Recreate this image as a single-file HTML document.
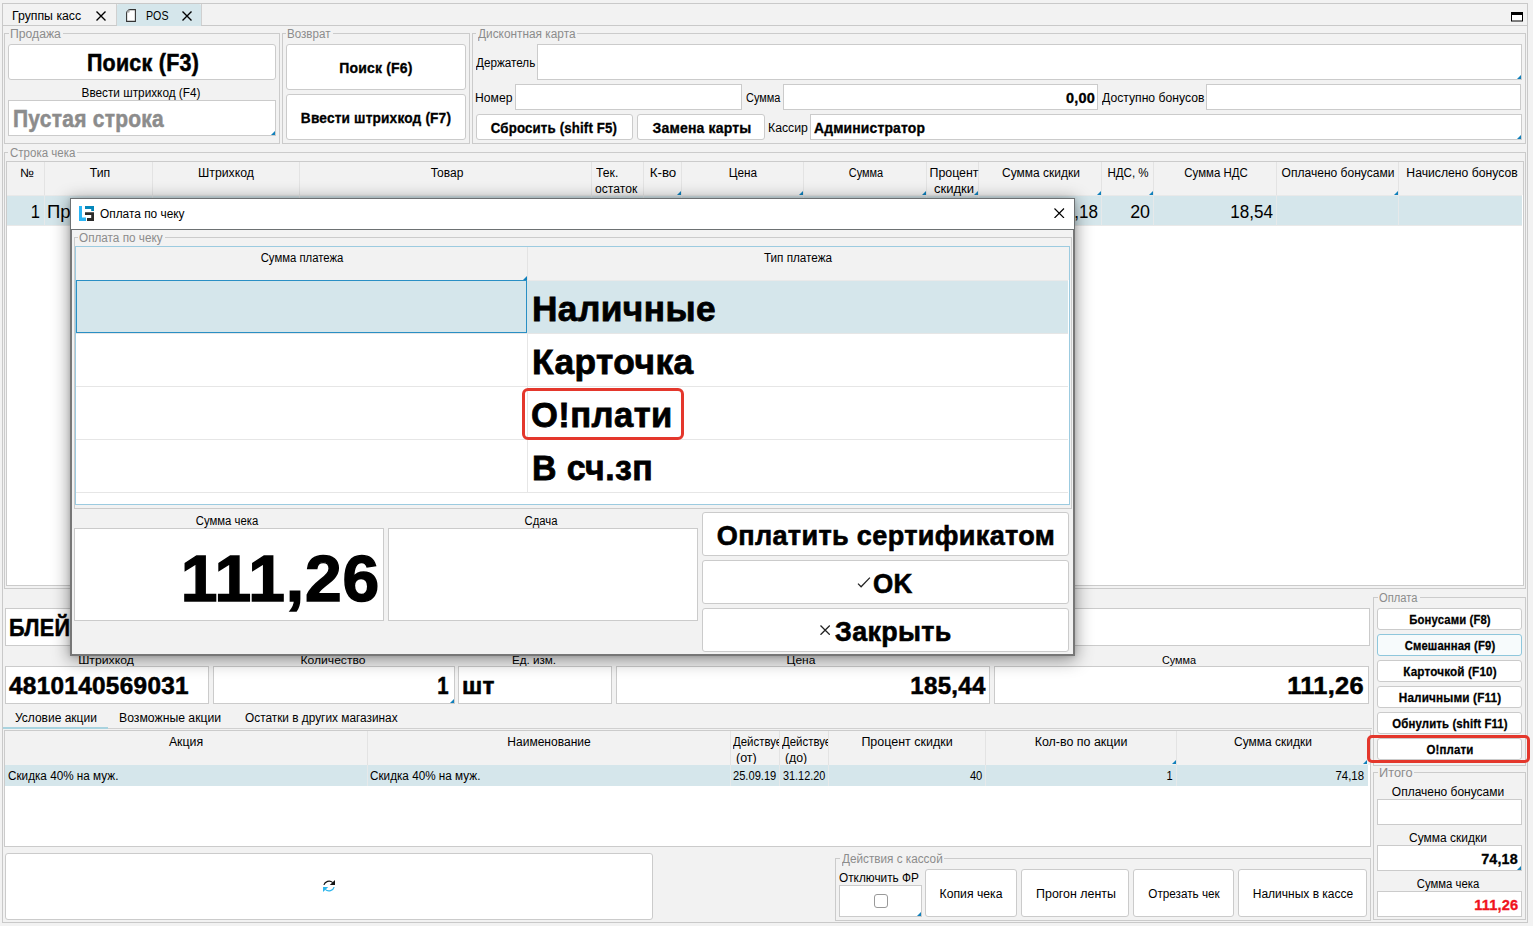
<!DOCTYPE html>
<html lang="ru"><head><meta charset="utf-8"><title>POS</title>
<style>
*{box-sizing:content-box;margin:0;padding:0}
html,body{width:1533px;height:926px;overflow:hidden;background:#f2f2f2}
body{position:relative;font-family:"Liberation Sans",sans-serif;color:#000}
.b{position:absolute;display:block}
.t{position:absolute;display:inline-block;white-space:nowrap}
</style></head>
<body>
<div class="b" style="left:2px;top:3px;width:1524px;height:918px;border:1px solid #c9c9c9;"></div>
<div class="b" style="left:3px;top:25px;width:1524px;height:1px;background:#c9c9c9"></div>
<div class="b" style="left:117px;top:4px;width:84px;height:22px;background:#d5e6eb;border-radius:2px 2px 0 0;"></div>
<div class="b" style="left:116px;top:4px;width:1px;height:21px;background:#d0d0d0"></div>
<div class="b" style="left:201px;top:4px;width:1px;height:21px;background:#d0d0d0"></div>
<span class="t" id="t1" style="top:7.84px;font-size:12px;line-height:16px;left:12.34px;transform-origin:0 50%;transform:scaleX(1.0244);">Группы касс</span>
<span class="t" id="t2" style="top:7.84px;font-size:12px;line-height:16px;left:145.97px;transform-origin:0 50%;transform:scaleX(0.8870);">POS</span>
<svg class="b" style="left:96px;top:10.5px" width="10" height="10" viewBox="0 0 10 10"><path d="M0.5 0.5 L9.5 9.5 M9.5 0.5 L0.5 9.5" stroke="#000" stroke-width="1.4" fill="none"/></svg>
<svg class="b" style="left:182px;top:10.5px" width="10" height="10" viewBox="0 0 10 10"><path d="M0.5 0.5 L9.5 9.5 M9.5 0.5 L0.5 9.5" stroke="#000" stroke-width="1.4" fill="none"/></svg>
<svg class="b" style="left:126px;top:9px" width="10" height="13" viewBox="0 0 10 13"><path d="M3.2 0.6 H9.4 V12.4 H0.6 V3.2 Z" fill="#fff" stroke="#333" stroke-width="1.1"/><path d="M0.6 3.2 H3.2 V0.6 Z" fill="#bbb" stroke="#888" stroke-width="0.5"/></svg>
<svg class="b" style="left:1511px;top:11.5px" width="12" height="10" viewBox="0 0 12 10"><rect x="0.5" y="0.5" width="11" height="8.5" fill="#fff" stroke="#000" stroke-width="1"/><rect x="0" y="0" width="12" height="3" fill="#000"/></svg>
<div class="b" style="left:4px;top:33px;width:274px;height:109px;border:1px solid #cbcbcb;"></div>
<div class="b" style="left:8.8px;top:33px;width:54px;height:1px;background:#f2f2f2"></div>
<span class="t" id="t3" style="top:25.57px;font-size:12.5px;line-height:16px;color:#8c8c8c;left:9.85px;transform-origin:0 50%;transform:scaleX(0.9751);">Продажа</span>
<div class="b" style="left:8px;top:44px;width:266px;height:34px;background:#fff;border:1px solid #cbcbcb;border-radius:3px;"></div>
<span class="t" id="t4" style="top:48.03px;font-size:23px;line-height:30px;font-weight:700;-webkit-text-stroke:0.51px;letter-spacing:0.28px;left:142.65px;transform-origin:50% 50%;transform:translateX(-50%) scaleX(0.9316);">Поиск (F3)</span>
<span class="t" id="t5" style="top:84.84px;font-size:12px;line-height:16px;left:140.84px;transform-origin:50% 50%;transform:translateX(-50%) scaleX(0.9823);">Ввести штрихкод (F4)</span>
<div class="b" style="left:8px;top:100px;width:266px;height:34px;background:#fff;border:1px solid #cbcbcb;"></div>
<span class="t" id="t6" style="top:104.03px;font-size:23px;line-height:30px;font-weight:700;-webkit-text-stroke:0.51px;letter-spacing:0.28px;color:#8c8c8c;left:12.52px;transform-origin:0 50%;transform:scaleX(0.9125);">Пустая строка</span>
<div class="b" style="left:271px;top:131px;width:0;height:0;border-left:4px solid transparent;border-bottom:4px solid #1080bb"></div>
<div class="b" style="left:282px;top:33px;width:186px;height:109px;border:1px solid #cbcbcb;"></div>
<div class="b" style="left:286.2px;top:33px;width:46.5px;height:1px;background:#f2f2f2"></div>
<span class="t" id="t7" style="top:25.57px;font-size:12.5px;line-height:16px;color:#8c8c8c;left:287.29px;transform-origin:0 50%;transform:scaleX(0.9272);">Возврат</span>
<div class="b" style="left:286px;top:44px;width:178px;height:44px;background:#fff;border:1px solid #cbcbcb;border-radius:3px;"></div>
<span class="t" id="t8" style="top:59.15px;font-size:14px;line-height:18px;font-weight:700;-webkit-text-stroke:0.31px;letter-spacing:0.17px;left:376.40px;transform-origin:50% 50%;transform:translateX(-50%) scaleX(0.9999);">Поиск (F6)</span>
<div class="b" style="left:286px;top:94px;width:178px;height:44px;background:#fff;border:1px solid #cbcbcb;border-radius:3px;"></div>
<span class="t" id="t9" style="top:108.95px;font-size:14px;line-height:18px;font-weight:700;-webkit-text-stroke:0.31px;letter-spacing:0.17px;left:375.90px;transform-origin:50% 50%;transform:translateX(-50%) scaleX(0.9771);">Ввести штрихкод (F7)</span>
<div class="b" style="left:472px;top:33px;width:1052px;height:109px;border:1px solid #cbcbcb;"></div>
<div class="b" style="left:475.8px;top:33px;width:101.6px;height:1px;background:#f2f2f2"></div>
<span class="t" id="t10" style="top:25.57px;font-size:12.5px;line-height:16px;color:#8c8c8c;left:477.80px;transform-origin:0 50%;transform:scaleX(0.9478);">Дисконтная карта</span>
<span class="t" id="t11" style="top:54.84px;font-size:12px;line-height:16px;left:476.20px;transform-origin:0 50%;transform:scaleX(0.9741);">Держатель</span>
<div class="b" style="left:537px;top:44px;width:983px;height:34px;background:#fff;border:1px solid #cbcbcb;"></div>
<div class="b" style="left:1517px;top:75px;width:0;height:0;border-left:4px solid transparent;border-bottom:4px solid #1080bb"></div>
<span class="t" id="t12" style="top:89.84px;font-size:12px;line-height:16px;left:475.25px;transform-origin:0 50%;transform:scaleX(1.0137);">Номер</span>
<div class="b" style="left:515px;top:84px;width:225px;height:24px;background:#fff;border:1px solid #cbcbcb;"></div>
<span class="t" id="t13" style="top:89.84px;font-size:12px;line-height:16px;left:746.19px;transform-origin:0 50%;transform:scaleX(0.9135);">Сумма</span>
<div class="b" style="left:783px;top:84px;width:313px;height:24px;background:#fff;border:1px solid #cbcbcb;"></div>
<span class="t" id="t14" style="top:89.15px;font-size:14px;line-height:18px;font-weight:700;-webkit-text-stroke:0.31px;letter-spacing:0.17px;right:438.40px;transform-origin:100% 50%;transform:scaleX(1.0349);">0,00</span>
<span class="t" id="t15" style="top:89.84px;font-size:12px;line-height:16px;left:1102.00px;transform-origin:0 50%;transform:scaleX(1.0145);">Доступно бонусов</span>
<div class="b" style="left:1206px;top:84px;width:313px;height:24px;background:#fff;border:1px solid #cbcbcb;"></div>
<div class="b" style="left:476px;top:114px;width:155px;height:24px;background:#fff;border:1px solid #cbcbcb;border-radius:3px;"></div>
<span class="t" id="t16" style="top:118.95px;font-size:14px;line-height:18px;font-weight:700;-webkit-text-stroke:0.31px;letter-spacing:0.17px;left:554.41px;transform-origin:50% 50%;transform:translateX(-50%) scaleX(0.9463);">Сбросить (shift F5)</span>
<div class="b" style="left:637px;top:114px;width:126px;height:24px;background:#fff;border:1px solid #cbcbcb;border-radius:3px;"></div>
<span class="t" id="t17" style="top:118.95px;font-size:14px;line-height:18px;font-weight:700;-webkit-text-stroke:0.31px;letter-spacing:0.17px;left:701.67px;transform-origin:50% 50%;transform:translateX(-50%) scaleX(1.0006);">Замена карты</span>
<span class="t" id="t18" style="top:119.84px;font-size:12px;line-height:16px;left:768.44px;transform-origin:0 50%;transform:scaleX(1.0208);">Кассир</span>
<div class="b" style="left:810px;top:114px;width:710px;height:24px;background:#fff;border:1px solid #cbcbcb;"></div>
<span class="t" id="t19" style="top:119.15px;font-size:14px;line-height:18px;font-weight:700;-webkit-text-stroke:0.31px;letter-spacing:0.17px;left:814.44px;transform-origin:0 50%;transform:scaleX(0.9917);">Администратор</span>
<div class="b" style="left:1517px;top:135px;width:0;height:0;border-left:4px solid transparent;border-bottom:4px solid #1080bb"></div>
<div class="b" style="left:4px;top:152px;width:1520px;height:435px;border:1px solid #cbcbcb;"></div>
<div class="b" style="left:8.2px;top:152px;width:69px;height:1px;background:#f2f2f2"></div>
<span class="t" id="t20" style="top:144.57px;font-size:12.5px;line-height:16px;color:#8c8c8c;left:9.66px;transform-origin:0 50%;transform:scaleX(0.9223);">Строка чека</span>
<div class="b" style="left:6px;top:161px;width:1516px;height:423px;background:#fff;border:1px solid #cbcbcb;"></div>
<div class="b" style="left:7px;top:162px;width:1516px;height:33px;background:#f2f2f2;"></div>
<div class="b" style="left:44px;top:162px;width:1px;height:33px;background:#e3e3e3"></div>
<div class="b" style="left:152px;top:162px;width:1px;height:33px;background:#e3e3e3"></div>
<div class="b" style="left:299px;top:162px;width:1px;height:33px;background:#e3e3e3"></div>
<div class="b" style="left:591px;top:162px;width:1px;height:33px;background:#e3e3e3"></div>
<div class="b" style="left:643px;top:162px;width:1px;height:33px;background:#e3e3e3"></div>
<div class="b" style="left:681px;top:162px;width:1px;height:33px;background:#e3e3e3"></div>
<div class="b" style="left:803px;top:162px;width:1px;height:33px;background:#e3e3e3"></div>
<div class="b" style="left:926px;top:162px;width:1px;height:33px;background:#e3e3e3"></div>
<div class="b" style="left:978px;top:162px;width:1px;height:33px;background:#e3e3e3"></div>
<div class="b" style="left:1101px;top:162px;width:1px;height:33px;background:#e3e3e3"></div>
<div class="b" style="left:1153px;top:162px;width:1px;height:33px;background:#e3e3e3"></div>
<div class="b" style="left:1276px;top:162px;width:1px;height:33px;background:#e3e3e3"></div>
<div class="b" style="left:1398px;top:162px;width:1px;height:33px;background:#e3e3e3"></div>
<div class="b" style="left:7px;top:195px;width:1515px;height:31px;background:#e9e9e9;"></div>
<div class="b" style="left:7px;top:196px;width:1515px;height:29px;background:#d5e6eb;"></div>
<div class="b" style="left:44px;top:195px;width:1px;height:31px;background:#e6e9ea"></div>
<div class="b" style="left:152px;top:195px;width:1px;height:31px;background:#e6e9ea"></div>
<div class="b" style="left:299px;top:195px;width:1px;height:31px;background:#e6e9ea"></div>
<div class="b" style="left:591px;top:195px;width:1px;height:31px;background:#e6e9ea"></div>
<div class="b" style="left:643px;top:195px;width:1px;height:31px;background:#e6e9ea"></div>
<div class="b" style="left:681px;top:195px;width:1px;height:31px;background:#e6e9ea"></div>
<div class="b" style="left:803px;top:195px;width:1px;height:31px;background:#e6e9ea"></div>
<div class="b" style="left:926px;top:195px;width:1px;height:31px;background:#e6e9ea"></div>
<div class="b" style="left:978px;top:195px;width:1px;height:31px;background:#e6e9ea"></div>
<div class="b" style="left:1101px;top:195px;width:1px;height:31px;background:#e6e9ea"></div>
<div class="b" style="left:1153px;top:195px;width:1px;height:31px;background:#e6e9ea"></div>
<div class="b" style="left:1276px;top:195px;width:1px;height:31px;background:#e6e9ea"></div>
<div class="b" style="left:1398px;top:195px;width:1px;height:31px;background:#e6e9ea"></div>
<span class="t" id="t21" style="top:164.84px;font-size:12px;line-height:16px;left:26.66px;transform-origin:50% 50%;transform:translateX(-50%) scaleX(1.0929);">№</span>
<span class="t" id="t22" style="top:164.84px;font-size:12px;line-height:16px;left:99.65px;transform-origin:50% 50%;transform:translateX(-50%) scaleX(1.0193);">Тип</span>
<span class="t" id="t23" style="top:164.84px;font-size:12px;line-height:16px;left:226.45px;transform-origin:50% 50%;transform:translateX(-50%) scaleX(1.0249);">Штрихкод</span>
<span class="t" id="t24" style="top:164.84px;font-size:12px;line-height:16px;left:446.55px;transform-origin:50% 50%;transform:translateX(-50%) scaleX(1.0006);">Товар</span>
<span class="t" id="t25" style="top:164.84px;font-size:12px;line-height:16px;left:663.15px;transform-origin:50% 50%;transform:translateX(-50%) scaleX(1.1123);">К-во</span>
<span class="t" id="t26" style="top:164.84px;font-size:12px;line-height:16px;left:742.90px;transform-origin:50% 50%;transform:translateX(-50%) scaleX(0.9825);">Цена</span>
<span class="t" id="t27" style="top:164.84px;font-size:12px;line-height:16px;left:865.61px;transform-origin:50% 50%;transform:translateX(-50%) scaleX(0.9135);">Сумма</span>
<span class="t" id="t28" style="top:164.84px;font-size:12px;line-height:16px;left:1040.97px;transform-origin:50% 50%;transform:translateX(-50%) scaleX(0.9976);">Сумма скидки</span>
<span class="t" id="t29" style="top:164.84px;font-size:12px;line-height:16px;left:1128.12px;transform-origin:50% 50%;transform:translateX(-50%) scaleX(0.9638);">НДС, %</span>
<span class="t" id="t30" style="top:164.84px;font-size:12px;line-height:16px;left:1215.83px;transform-origin:50% 50%;transform:translateX(-50%) scaleX(0.9539);">Сумма НДС</span>
<span class="t" id="t31" style="top:164.84px;font-size:12px;line-height:16px;left:1338.47px;transform-origin:50% 50%;transform:translateX(-50%) scaleX(1.0027);">Оплачено бонусами</span>
<span class="t" id="t32" style="top:164.84px;font-size:12px;line-height:16px;left:1461.61px;transform-origin:50% 50%;transform:translateX(-50%) scaleX(1.0161);">Начислено бонусов</span>
<span class="t" id="t33" style="top:164.84px;font-size:12px;line-height:16px;left:595.61px;transform-origin:0 50%;transform:scaleX(1.0173);">Тек.</span>
<span class="t" id="t34" style="top:180.84px;font-size:12px;line-height:16px;left:595.42px;transform-origin:0 50%;transform:scaleX(1.0110);">остаток</span>
<span class="t" id="t35" style="top:164.84px;font-size:12px;line-height:16px;left:953.55px;transform-origin:50% 50%;transform:translateX(-50%) scaleX(1.0320);">Процент</span>
<span class="t" id="t36" style="top:180.84px;font-size:12px;line-height:16px;left:954.18px;transform-origin:50% 50%;transform:translateX(-50%) scaleX(1.0885);">скидки</span>
<div class="b" style="left:677px;top:191px;width:0;height:0;border-left:4px solid transparent;border-bottom:4px solid #1080bb"></div>
<div class="b" style="left:799px;top:191px;width:0;height:0;border-left:4px solid transparent;border-bottom:4px solid #1080bb"></div>
<div class="b" style="left:922px;top:191px;width:0;height:0;border-left:4px solid transparent;border-bottom:4px solid #1080bb"></div>
<div class="b" style="left:974px;top:191px;width:0;height:0;border-left:4px solid transparent;border-bottom:4px solid #1080bb"></div>
<div class="b" style="left:1097px;top:191px;width:0;height:0;border-left:4px solid transparent;border-bottom:4px solid #1080bb"></div>
<div class="b" style="left:1149px;top:191px;width:0;height:0;border-left:4px solid transparent;border-bottom:4px solid #1080bb"></div>
<div class="b" style="left:1394px;top:191px;width:0;height:0;border-left:4px solid transparent;border-bottom:4px solid #1080bb"></div>
<span class="t" id="t37" style="top:200.66px;font-size:18px;line-height:23px;right:1492.83px;transform-origin:100% 50%;transform:scaleX(0.9195);">1</span>
<span class="t" id="t38" style="top:200.66px;font-size:18px;line-height:23px;left:47.35px;transform-origin:0 50%;transform:scaleX(1.0293);">Продажа</span>
<span class="t" id="t39" style="top:200.66px;font-size:18px;line-height:23px;left:155.73px;transform-origin:0 50%;transform:scaleX(0.9642);">4810140569031</span>
<span class="t" id="t40" style="top:200.66px;font-size:18px;line-height:23px;left:301.68px;transform-origin:0 50%;transform:scaleX(0.9401);">БЛЕЙЗЕР МУЖСКОЙ</span>
<span class="t" id="t41" style="top:200.66px;font-size:18px;line-height:23px;right:855.33px;transform-origin:100% 50%;transform:scaleX(0.9195);">1</span>
<span class="t" id="t42" style="top:200.66px;font-size:18px;line-height:23px;right:733.58px;transform-origin:100% 50%;transform:scaleX(0.9480);">185,44</span>
<span class="t" id="t43" style="top:200.66px;font-size:18px;line-height:23px;right:610.28px;transform-origin:100% 50%;transform:scaleX(0.9895);">111,26</span>
<span class="t" id="t44" style="top:200.66px;font-size:18px;line-height:23px;right:558.57px;transform-origin:100% 50%;transform:scaleX(0.9641);">40</span>
<span class="t" id="t45" style="top:200.66px;font-size:18px;line-height:23px;right:435.31px;transform-origin:100% 50%;transform:scaleX(0.9478);">74,18</span>
<span class="t" id="t46" style="top:200.66px;font-size:18px;line-height:23px;right:383.35px;transform-origin:100% 50%;transform:scaleX(0.9931);">20</span>
<span class="t" id="t47" style="top:200.66px;font-size:18px;line-height:23px;right:260.28px;transform-origin:100% 50%;transform:scaleX(0.9478);">18,54</span>
<div class="b" style="left:5px;top:608px;width:1363px;height:36px;background:#fff;border:1px solid #cbcbcb;"></div>
<span class="t" id="t48" style="top:612.11px;font-size:24.5px;line-height:32px;font-weight:700;-webkit-text-stroke:0.54px;letter-spacing:0.29px;left:9.39px;transform-origin:0 50%;transform:scaleX(0.8830);">БЛЕЙЗЕР МУЖСКОЙ</span>
<span class="t" id="t49" style="top:651.65px;font-size:11.7px;line-height:15px;left:105.56px;transform-origin:50% 50%;transform:translateX(-50%) scaleX(1.0454);">Штрихкод</span>
<div class="b" style="left:5px;top:666px;width:202px;height:36px;background:#fff;border:1px solid #cbcbcb;"></div>
<span class="t" id="t50" style="top:670.21px;font-size:24.5px;line-height:32px;font-weight:700;-webkit-text-stroke:0.54px;letter-spacing:0.29px;left:9.47px;transform-origin:0 50%;transform:scaleX(0.9945);">4810140569031</span>
<span class="t" id="t51" style="top:651.65px;font-size:11.7px;line-height:15px;left:332.97px;transform-origin:50% 50%;transform:translateX(-50%) scaleX(1.0351);">Количество</span>
<div class="b" style="left:213px;top:666px;width:240px;height:36px;background:#fff;border:1px solid #cbcbcb;"></div>
<span class="t" id="t52" style="top:670.21px;font-size:24.5px;line-height:32px;font-weight:700;-webkit-text-stroke:0.54px;letter-spacing:0.29px;right:1084.47px;transform-origin:100% 50%;transform:scaleX(0.8317);">1</span>
<div class="b" style="left:450px;top:699px;width:0;height:0;border-left:4px solid transparent;border-bottom:4px solid #1080bb"></div>
<span class="t" id="t53" style="top:651.65px;font-size:11.7px;line-height:15px;left:534.27px;transform-origin:50% 50%;transform:translateX(-50%) scaleX(0.9987);">Ед. изм.</span>
<div class="b" style="left:458px;top:666px;width:152px;height:36px;background:#fff;border:1px solid #cbcbcb;"></div>
<span class="t" id="t54" style="top:670.21px;font-size:24.5px;line-height:32px;font-weight:700;-webkit-text-stroke:0.54px;letter-spacing:0.29px;left:462.35px;transform-origin:0 50%;transform:scaleX(0.9934);">шт</span>
<span class="t" id="t55" style="top:651.65px;font-size:11.7px;line-height:15px;left:801.49px;transform-origin:50% 50%;transform:translateX(-50%) scaleX(1.0260);">Цена</span>
<div class="b" style="left:616px;top:666px;width:372px;height:36px;background:#fff;border:1px solid #cbcbcb;"></div>
<span class="t" id="t56" style="top:670.21px;font-size:24.5px;line-height:32px;font-weight:700;-webkit-text-stroke:0.54px;letter-spacing:0.29px;right:547.53px;transform-origin:100% 50%;transform:scaleX(0.9832);">185,44</span>
<span class="t" id="t57" style="top:651.65px;font-size:11.7px;line-height:15px;left:1179.21px;transform-origin:50% 50%;transform:translateX(-50%) scaleX(0.9287);">Сумма</span>
<div class="b" style="left:994px;top:666px;width:373px;height:36px;background:#fff;border:1px solid #cbcbcb;"></div>
<span class="t" id="t58" style="top:670.21px;font-size:24.5px;line-height:32px;font-weight:700;-webkit-text-stroke:0.54px;letter-spacing:0.29px;right:168.74px;transform-origin:100% 50%;transform:scaleX(1.0375);">111,26</span>
<div class="b" style="left:3px;top:728px;width:1369px;height:1px;background:#d0d0d0"></div>
<div class="b" style="left:3px;top:727px;width:105px;height:2px;background:#a9d3df"></div>
<span class="t" id="t59" style="top:709.84px;font-size:12px;line-height:16px;left:14.81px;transform-origin:0 50%;transform:scaleX(0.9996);">Условие акции</span>
<span class="t" id="t60" style="top:709.84px;font-size:12px;line-height:16px;left:119.05px;transform-origin:0 50%;transform:scaleX(1.0184);">Возможные акции</span>
<span class="t" id="t61" style="top:709.84px;font-size:12px;line-height:16px;left:244.65px;transform-origin:0 50%;transform:scaleX(0.9866);">Остатки в других магазинах</span>
<div class="b" style="left:4px;top:730px;width:1365px;height:115px;background:#fff;border:1px solid #cbcbcb;"></div>
<div class="b" style="left:5px;top:731px;width:1365px;height:34px;background:#f2f2f2;"></div>
<div class="b" style="left:367px;top:731px;width:1px;height:34px;background:#e3e3e3"></div>
<div class="b" style="left:730px;top:731px;width:1px;height:34px;background:#e3e3e3"></div>
<div class="b" style="left:779px;top:731px;width:1px;height:34px;background:#e3e3e3"></div>
<div class="b" style="left:828px;top:731px;width:1px;height:34px;background:#e3e3e3"></div>
<div class="b" style="left:985px;top:731px;width:1px;height:34px;background:#e3e3e3"></div>
<div class="b" style="left:1176px;top:731px;width:1px;height:34px;background:#e3e3e3"></div>
<div class="b" style="left:5px;top:765px;width:1363px;height:21px;background:#d5e6eb;"></div>
<div class="b" style="left:367px;top:765px;width:1px;height:21px;background:#e6e9ea"></div>
<div class="b" style="left:730px;top:765px;width:1px;height:21px;background:#e6e9ea"></div>
<div class="b" style="left:779px;top:765px;width:1px;height:21px;background:#e6e9ea"></div>
<div class="b" style="left:828px;top:765px;width:1px;height:21px;background:#e6e9ea"></div>
<div class="b" style="left:985px;top:765px;width:1px;height:21px;background:#e6e9ea"></div>
<div class="b" style="left:1176px;top:765px;width:1px;height:21px;background:#e6e9ea"></div>
<span class="t" id="t62" style="top:733.84px;font-size:12px;line-height:16px;left:186.35px;transform-origin:50% 50%;transform:translateX(-50%) scaleX(1.0263);">Акция</span>
<span class="t" id="t63" style="top:733.84px;font-size:12px;line-height:16px;left:548.77px;transform-origin:50% 50%;transform:translateX(-50%) scaleX(1.0029);">Наименование</span>
<div class="b" style="left:731px;top:731px;width:48px;height:33px;overflow:hidden"><span class="t" id="t64" style="top:2.84px;font-size:12px;line-height:16px;left:2.40px;transform-origin:0 50%;transform:scaleX(0.9526);">Действует</span><span class="t" id="t65" style="top:19.34px;font-size:12px;line-height:16px;left:5.41px;transform-origin:0 50%;transform:scaleX(1.0420);">(от)</span></div>
<div class="b" style="left:780px;top:731px;width:48px;height:33px;overflow:hidden"><span class="t" id="t66" style="top:2.84px;font-size:12px;line-height:16px;left:2.40px;transform-origin:0 50%;transform:scaleX(0.9526);">Действует</span><span class="t" id="t67" style="top:19.34px;font-size:12px;line-height:16px;left:5.42px;transform-origin:0 50%;transform:scaleX(1.0252);">(до)</span></div>
<span class="t" id="t68" style="top:733.84px;font-size:12px;line-height:16px;left:906.88px;transform-origin:50% 50%;transform:translateX(-50%) scaleX(1.0394);">Процент скидки</span>
<span class="t" id="t69" style="top:733.84px;font-size:12px;line-height:16px;left:1080.88px;transform-origin:50% 50%;transform:translateX(-50%) scaleX(1.0375);">Кол-во по акции</span>
<span class="t" id="t70" style="top:733.84px;font-size:12px;line-height:16px;left:1272.57px;transform-origin:50% 50%;transform:translateX(-50%) scaleX(0.9976);">Сумма скидки</span>
<div class="b" style="left:1172px;top:760px;width:0;height:0;border-left:4px solid transparent;border-bottom:4px solid #1080bb"></div>
<div class="b" style="left:1363px;top:760px;width:0;height:0;border-left:4px solid transparent;border-bottom:4px solid #1080bb"></div>
<span class="t" id="t71" style="top:768.14px;font-size:12px;line-height:16px;left:7.65px;transform-origin:0 50%;transform:scaleX(0.9770);">Скидка 40% на муж.</span>
<span class="t" id="t72" style="top:768.14px;font-size:12px;line-height:16px;left:370.45px;transform-origin:0 50%;transform:scaleX(0.9770);">Скидка 40% на муж.</span>
<span class="t" id="t73" style="top:768.14px;font-size:12px;line-height:16px;left:733.38px;transform-origin:0 50%;transform:scaleX(0.9264);">25.09.19</span>
<span class="t" id="t74" style="top:768.14px;font-size:12px;line-height:16px;left:782.96px;transform-origin:0 50%;transform:scaleX(0.9058);">31.12.20</span>
<span class="t" id="t75" style="top:768.14px;font-size:12px;line-height:16px;right:550.22px;transform-origin:100% 50%;transform:scaleX(0.9330);">40</span>
<span class="t" id="t76" style="top:768.14px;font-size:12px;line-height:16px;right:360.05px;transform-origin:100% 50%;transform:scaleX(0.9195);">1</span>
<span class="t" id="t77" style="top:768.14px;font-size:12px;line-height:16px;right:168.54px;transform-origin:100% 50%;transform:scaleX(0.9489);">74,18</span>
<div class="b" style="left:5px;top:853px;width:646px;height:65px;background:#fff;border:1px solid #cbcbcb;border-radius:3px;"></div>
<svg class="b" style="left:323px;top:880px" width="12" height="12" viewBox="0 0 12 12"><path d="M0.9 4.9 C1.9 1.4 6.6 -0.2 9.8 2.6" fill="none" stroke="#151515" stroke-width="1.25"/><path d="M12 0 V5 H6.8 Z" fill="#151515"/><path d="M11.1 7.1 C10.1 10.6 5.4 12.2 2.2 9.4" fill="none" stroke="#2bb5ec" stroke-width="1.25"/><path d="M0 12 V7 H5.2 Z" fill="#2bb5ec"/></svg>
<div class="b" style="left:835px;top:858px;width:534px;height:61px;border:1px solid #cbcbcb;"></div>
<div class="b" style="left:839.5px;top:858px;width:104px;height:1px;background:#f2f2f2"></div>
<span class="t" id="t78" style="top:850.57px;font-size:12.5px;line-height:16px;color:#8c8c8c;left:841.50px;transform-origin:0 50%;transform:scaleX(0.9390);">Действия с кассой</span>
<span class="t" id="t79" style="top:870.14px;font-size:12px;line-height:16px;left:839.05px;transform-origin:0 50%;transform:scaleX(0.9844);">Отключить ФР</span>
<div class="b" style="left:839px;top:885px;width:81px;height:30px;background:#fff;border:1px solid #cbcbcb;"></div>
<div class="b" style="left:917px;top:912px;width:0;height:0;border-left:4px solid transparent;border-bottom:4px solid #1080bb"></div>
<div class="b" style="left:874px;top:894px;width:12px;height:12px;background:#fff;border:1px solid #999;border-radius:3px;"></div>
<div class="b" style="left:925px;top:869px;width:90px;height:46px;background:#fff;border:1px solid #cbcbcb;border-radius:3px;"></div>
<span class="t" id="t80" style="top:885.64px;font-size:12px;line-height:16px;left:971.48px;transform-origin:50% 50%;transform:translateX(-50%) scaleX(1.0172);">Копия чека</span>
<div class="b" style="left:1021px;top:869px;width:106px;height:46px;background:#fff;border:1px solid #cbcbcb;border-radius:3px;"></div>
<span class="t" id="t81" style="top:885.64px;font-size:12px;line-height:16px;left:1075.90px;transform-origin:50% 50%;transform:translateX(-50%) scaleX(1.0337);">Прогон ленты</span>
<div class="b" style="left:1133px;top:869px;width:99px;height:46px;background:#fff;border:1px solid #cbcbcb;border-radius:3px;"></div>
<span class="t" id="t82" style="top:885.64px;font-size:12px;line-height:16px;left:1184.13px;transform-origin:50% 50%;transform:translateX(-50%) scaleX(0.9765);">Отрезать чек</span>
<div class="b" style="left:1238px;top:869px;width:127px;height:46px;background:#fff;border:1px solid #cbcbcb;border-radius:3px;"></div>
<span class="t" id="t83" style="top:885.64px;font-size:12px;line-height:16px;left:1303.27px;transform-origin:50% 50%;transform:translateX(-50%) scaleX(0.9997);">Наличных в кассе</span>
<div class="b" style="left:1373px;top:597px;width:151px;height:167px;border:1px solid #cbcbcb;"></div>
<div class="b" style="left:1377.5px;top:597px;width:42px;height:1px;background:#f2f2f2"></div>
<span class="t" id="t84" style="top:589.57px;font-size:12.5px;line-height:16px;color:#8c8c8c;left:1378.98px;transform-origin:0 50%;transform:scaleX(0.8943);">Оплата</span>
<div class="b" style="left:1377px;top:608px;width:143px;height:20px;background:#fff;border:1px solid #cbcbcb;border-radius:3px;"></div>
<span class="t" id="t85" style="top:611.84px;font-size:12px;line-height:16px;font-weight:700;-webkit-text-stroke:0.26px;letter-spacing:0.14px;left:1449.52px;transform-origin:50% 50%;transform:translateX(-50%) scaleX(0.9431);">Бонусами (F8)</span>
<div class="b" style="left:1377px;top:634px;width:143px;height:20px;background:#f7fbfc;border:1px solid #8fc7dc;border-radius:3px;"></div>
<span class="t" id="t86" style="top:637.84px;font-size:12px;line-height:16px;font-weight:700;-webkit-text-stroke:0.26px;letter-spacing:0.14px;left:1449.70px;transform-origin:50% 50%;transform:translateX(-50%) scaleX(0.9402);">Смешанная (F9)</span>
<div class="b" style="left:1377px;top:660px;width:143px;height:20px;background:#fff;border:1px solid #cbcbcb;border-radius:3px;"></div>
<span class="t" id="t87" style="top:663.84px;font-size:12px;line-height:16px;font-weight:700;-webkit-text-stroke:0.26px;letter-spacing:0.14px;left:1449.52px;transform-origin:50% 50%;transform:translateX(-50%) scaleX(0.9769);">Карточкой (F10)</span>
<div class="b" style="left:1377px;top:686px;width:143px;height:20px;background:#fff;border:1px solid #cbcbcb;border-radius:3px;"></div>
<span class="t" id="t88" style="top:689.84px;font-size:12px;line-height:16px;font-weight:700;-webkit-text-stroke:0.26px;letter-spacing:0.14px;left:1449.52px;transform-origin:50% 50%;transform:translateX(-50%) scaleX(0.9807);">Наличными (F11)</span>
<div class="b" style="left:1377px;top:712px;width:143px;height:20px;background:#fff;border:1px solid #cbcbcb;border-radius:3px;"></div>
<span class="t" id="t89" style="top:715.84px;font-size:12px;line-height:16px;font-weight:700;-webkit-text-stroke:0.26px;letter-spacing:0.14px;left:1449.70px;transform-origin:50% 50%;transform:translateX(-50%) scaleX(0.9507);">Обнулить (shift F11)</span>
<div class="b" style="left:1377px;top:738px;width:143px;height:20px;background:#fff;border:1px solid #cbcbcb;border-radius:3px;"></div>
<span class="t" id="t90" style="top:741.84px;font-size:12px;line-height:16px;font-weight:700;-webkit-text-stroke:0.26px;letter-spacing:0.14px;left:1449.88px;transform-origin:50% 50%;transform:translateX(-50%) scaleX(0.9570);">О!плати</span>
<div class="b" style="left:1367px;top:735px;width:157px;height:22px;border:3px solid #e4372c;border-radius:5px;"></div>
<div class="b" style="left:1373px;top:772px;width:151px;height:146px;border:1px solid #cbcbcb;"></div>
<div class="b" style="left:1377.5px;top:772px;width:36px;height:1px;background:#f2f2f2"></div>
<span class="t" id="t91" style="top:764.57px;font-size:12.5px;line-height:16px;color:#8c8c8c;left:1378.50px;transform-origin:0 50%;transform:scaleX(1.0232);">Итого</span>
<span class="t" id="t92" style="top:783.84px;font-size:12px;line-height:16px;left:1448.07px;transform-origin:50% 50%;transform:translateX(-50%) scaleX(0.9982);">Оплачено бонусами</span>
<div class="b" style="left:1377px;top:799px;width:143px;height:24px;background:#fff;border:1px solid #cbcbcb;"></div>
<span class="t" id="t93" style="top:829.84px;font-size:12px;line-height:16px;left:1448.07px;transform-origin:50% 50%;transform:translateX(-50%) scaleX(0.9976);">Сумма скидки</span>
<div class="b" style="left:1377px;top:845px;width:143px;height:24px;background:#fff;border:1px solid #cbcbcb;"></div>
<span class="t" id="t94" style="top:850.15px;font-size:14px;line-height:18px;font-weight:700;-webkit-text-stroke:0.31px;letter-spacing:0.17px;right:14.63px;transform-origin:100% 50%;transform:scaleX(1.0219);">74,18</span>
<div class="b" style="left:1517px;top:866px;width:0;height:0;border-left:4px solid transparent;border-bottom:4px solid #1080bb"></div>
<span class="t" id="t95" style="top:876.14px;font-size:12px;line-height:16px;left:1447.70px;transform-origin:50% 50%;transform:translateX(-50%) scaleX(0.9442);">Сумма чека</span>
<div class="b" style="left:1377px;top:891px;width:143px;height:24px;background:#fff;border:1px solid #cbcbcb;"></div>
<span class="t" id="t96" style="top:896.15px;font-size:14px;line-height:18px;font-weight:700;-webkit-text-stroke:0.31px;letter-spacing:0.17px;color:#f0141e;right:14.62px;transform-origin:100% 50%;transform:scaleX(1.0437);">111,26</span>
<!-- dialog -->
<div class="b" style="left:70px;top:198px;width:1005px;height:458px;background:#f2f2f2;box-shadow:0 3px 16px 1px rgba(0,0,0,.42), 0 0 4px rgba(0,0,0,.12)"></div>
<div class="b" style="left:70px;top:198px;width:1003px;height:30px;background:#fff;border:1px solid #6d7173;"></div>
<div class="b" style="left:70px;top:230px;width:1001px;height:422px;border:2px solid #777;border-top:none;height:424px;"></div>
<svg class="b" style="left:79px;top:206px" width="15" height="15" viewBox="0 0 15 15"><path d="M0 0 H3 V11.6 H7 V15 H0 Z" fill="#2bb5f5"/><path d="M6 0 H15 V5 H12.2 V3 H6 Z" fill="#0587ba"/><path d="M6 6.3 H15 V15 H8 V12.1 H12.2 V9 H6 Z" fill="#2b2b2b"/></svg>
<span class="t" id="t97" style="top:206.14px;font-size:12px;line-height:16px;left:100.44px;transform-origin:0 50%;transform:scaleX(0.9898);">Оплата по чеку</span>
<svg class="b" style="left:1054px;top:207.5px" width="10.5" height="10.5" viewBox="0 0 10.5 10.5"><path d="M0.5 0.5 L10.0 10.0 M10.0 0.5 L0.5 10.0" stroke="#000" stroke-width="1.15" fill="none"/></svg>
<div class="b" style="left:74px;top:237px;width:996px;height:270px;border:1px solid #cbcbcb;"></div>
<div class="b" style="left:77.6px;top:237px;width:87px;height:1px;background:#f2f2f2"></div>
<span class="t" id="t98" style="top:229.57px;font-size:12.5px;line-height:16px;color:#8c8c8c;left:79.05px;transform-origin:0 50%;transform:scaleX(0.9389);">Оплата по чеку</span>
<div class="b" style="left:75px;top:246px;width:993px;height:257px;background:#fff;border:1px solid #9ccbe0;"></div>
<div class="b" style="left:76px;top:247px;width:993px;height:33px;background:#f2f2f2;"></div>
<div class="b" style="left:527px;top:247px;width:1px;height:33px;background:#e3e3e3"></div>
<span class="t" id="t99" style="top:250.34px;font-size:12px;line-height:16px;left:302.40px;transform-origin:50% 50%;transform:translateX(-50%) scaleX(0.9441);">Сумма платежа</span>
<span class="t" id="t100" style="top:250.34px;font-size:12px;line-height:16px;left:797.87px;transform-origin:50% 50%;transform:translateX(-50%) scaleX(0.9751);">Тип платежа</span>
<div class="b" style="left:523px;top:276px;width:0;height:0;border-left:4px solid transparent;border-bottom:4px solid #1080bb"></div>
<div class="b" style="left:76px;top:280px;width:992px;height:53px;background:#d5e6eb;"></div>
<div class="b" style="left:527px;top:280px;width:541px;height:1px;background:#e9e9e9"></div>
<div class="b" style="left:76px;top:280px;width:449px;height:51px;background:#d5e6eb;border:1px solid #2a8fc4;"></div>
<div class="b" style="left:527px;top:333px;width:1px;height:160px;background:#e6e6e6"></div>
<div class="b" style="left:76px;top:333px;width:992px;height:1px;background:#e6e6e6"></div>
<div class="b" style="left:76px;top:386px;width:992px;height:1px;background:#e6e6e6"></div>
<div class="b" style="left:76px;top:439px;width:992px;height:1px;background:#e6e6e6"></div>
<div class="b" style="left:76px;top:492px;width:992px;height:1px;background:#e6e6e6"></div>
<span class="t" id="t101" style="top:286.17px;font-size:35px;line-height:46px;font-weight:700;-webkit-text-stroke:0.77px;letter-spacing:0.42px;left:531.79px;transform-origin:0 50%;transform:scaleX(1.0069);">Наличные</span>
<span class="t" id="t102" style="top:339.17px;font-size:35px;line-height:46px;font-weight:700;-webkit-text-stroke:0.77px;letter-spacing:0.42px;left:531.78px;transform-origin:0 50%;transform:scaleX(1.0101);">Карточка</span>
<span class="t" id="t103" style="top:392.17px;font-size:35px;line-height:46px;font-weight:700;-webkit-text-stroke:0.77px;letter-spacing:0.42px;left:531.30px;transform-origin:0 50%;transform:scaleX(0.9886);">О!плати</span>
<span class="t" id="t104" style="top:445.17px;font-size:35px;line-height:46px;font-weight:700;-webkit-text-stroke:0.77px;letter-spacing:0.42px;left:531.85px;transform-origin:0 50%;transform:scaleX(0.9683);">В сч.зп</span>
<div class="b" style="left:522px;top:388px;width:156px;height:46px;border:3px solid #e4372c;border-radius:6px;"></div>
<span class="t" id="t105" style="top:513.14px;font-size:12px;line-height:16px;left:227.10px;transform-origin:50% 50%;transform:translateX(-50%) scaleX(0.9442);">Сумма чека</span>
<div class="b" style="left:74px;top:528px;width:308px;height:91px;background:#fff;border:1px solid #cbcbcb;"></div>
<span class="t" id="t106" style="top:536.30px;font-size:65.5px;line-height:85px;font-weight:700;-webkit-text-stroke:1.44px;letter-spacing:0.79px;right:1153.09px;transform-origin:100% 50%;transform:scaleX(1.0065);">111,26</span>
<span class="t" id="t107" style="top:513.14px;font-size:12px;line-height:16px;left:540.70px;transform-origin:50% 50%;transform:translateX(-50%) scaleX(0.9415);">Сдача</span>
<div class="b" style="left:388px;top:528px;width:308px;height:91px;background:#fff;border:1px solid #cbcbcb;"></div>
<div class="b" style="left:702px;top:512px;width:365px;height:42px;background:#fff;border:1px solid #cbcbcb;border-radius:3px;"></div>
<span class="t" id="t108" style="top:518.37px;font-size:27.5px;line-height:36px;font-weight:700;-webkit-text-stroke:0.60px;letter-spacing:0.33px;left:886.16px;transform-origin:50% 50%;transform:translateX(-50%) scaleX(0.9855);">Оплатить сертификатом</span>
<div class="b" style="left:702px;top:560px;width:365px;height:42px;background:#fff;border:1px solid #cbcbcb;border-radius:3px;"></div>
<span class="t" id="t109" style="top:566.17px;font-size:27.5px;line-height:36px;font-weight:700;-webkit-text-stroke:0.60px;letter-spacing:0.33px;left:873.47px;transform-origin:0 50%;transform:scaleX(0.9459);">OK</span>
<svg class="b" style="left:857px;top:577px" width="14" height="11" viewBox="0 0 14 11"><path d="M1.0 6.6 L4.1 9.8 L12.9 0.6" fill="none" stroke="#222" stroke-width="1.25"/></svg>
<div class="b" style="left:702px;top:608px;width:365px;height:42px;background:#fff;border:1px solid #cbcbcb;border-radius:3px;"></div>
<span class="t" id="t110" style="top:613.67px;font-size:27.5px;line-height:36px;font-weight:700;-webkit-text-stroke:0.60px;letter-spacing:0.33px;left:835.18px;transform-origin:0 50%;transform:scaleX(0.9772);">Закрыть</span>
<svg class="b" style="left:819.7px;top:625px" width="10.3" height="10.3" viewBox="0 0 10.3 10.3"><path d="M0.5 0.5 L9.8 9.8 M9.8 0.5 L0.5 9.8" stroke="#222" stroke-width="1.25" fill="none"/></svg>
</body></html>
